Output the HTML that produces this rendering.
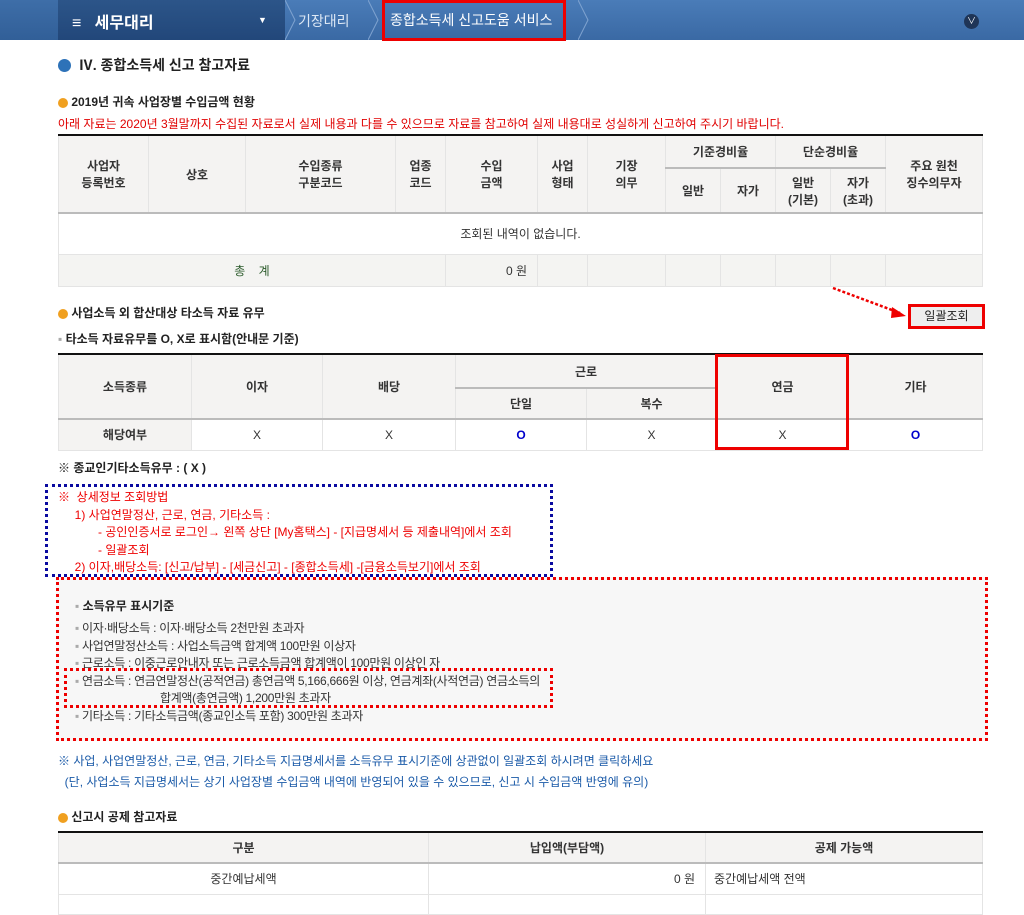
<!DOCTYPE html>
<html><head><meta charset="utf-8"><style>
*{margin:0;padding:0;box-sizing:border-box}
body{width:1024px;height:905px;overflow:hidden;background:#fff;font-family:"Liberation Sans","Noto Sans CJK KR","NanumGothic",sans-serif;font-size:12px;color:#333;position:relative}
.a{position:absolute;white-space:nowrap}
table{border-collapse:collapse;position:absolute;table-layout:fixed}
td,th{border:1px solid #e4e4e4;text-align:center;font-size:12px;padding:0}
th{background:#f4f3f2;font-weight:bold;color:#333}
.b{font-weight:bold;color:#222}
.dot{display:inline-block;width:13px;height:13px;border-radius:50%;vertical-align:-2px}
</style></head><body>
<!-- top bar -->
<div class="a" style="left:0;top:0;width:1024px;height:40px;background:linear-gradient(#4a7cb8,#3a69a4)"></div>
<div class="a" style="left:0;top:0;width:58px;height:40px;background:linear-gradient(#3e6ea8,#315f98)"></div>
<div class="a" style="left:58px;top:0;width:227px;height:40px;background:linear-gradient(#2c5589,#22477a)"></div>
<div class="a" style="left:72px;top:9px;color:#fff;font-size:16px;font-weight:bold">≡&nbsp;&nbsp; 세무대리</div>
<div class="a" style="left:258px;top:15px;color:#fff;font-size:9px">▼</div>
<svg class="a" style="left:285px;top:0" width="12" height="40"><path d="M0 0 L10 20 L0 40" fill="none" stroke="#7fa3d0"/></svg>
<div class="a" style="left:298px;top:11px;color:#dde8f5;font-size:14px">기장대리</div>
<svg class="a" style="left:368px;top:0" width="12" height="40"><path d="M0 0 L10 20 L0 40" fill="none" stroke="#7fa3d0"/></svg>
<div class="a" style="left:390px;top:10px;color:#fff;font-size:14px">종합소득세 신고도움 서비스</div>
<svg class="a" style="left:578px;top:0" width="12" height="40"><path d="M0 0 L10 20 L0 40" fill="none" stroke="#7fa3d0"/></svg>
<div class="a" style="left:382px;top:0;width:184px;height:41px;border:3px solid #e00"></div>
<div class="a" style="left:964px;top:14px;width:15px;height:15px;border-radius:50%;background:#1f3557;color:#fff;font-size:9px;text-align:center;line-height:15px">∨</div>

<div class="a b" style="left:58px;top:55px;font-size:14px"><span class="dot" style="background:#2d72b8"></span>&nbsp; Ⅳ. 종합소득세 신고 참고자료</div>
<div class="a b" style="left:58px;top:93px;font-size:12px"><span class="dot" style="background:#f0a020;width:10px;height:10px"></span> 2019년 귀속 사업장별 수입금액 현황</div>
<div class="a" style="left:58px;top:115px;color:#e00000;font-size:12px">아래 자료는 2020년 3월말까지 수집된 자료로서 실제 내용과 다를 수 있으므로 자료를 참고하여 실제 내용대로 성실하게 신고하여 주시기 바랍니다.</div>

<table style="left:58px;top:134px;width:924px;border-top:2px solid #111">
<colgroup><col style="width:90px"><col style="width:97px"><col style="width:150px"><col style="width:50px"><col style="width:92px"><col style="width:50px"><col style="width:78px"><col style="width:55px"><col style="width:55px"><col style="width:55px"><col style="width:55px"><col style="width:97px"></colgroup>
<tr style="height:33px"><th rowspan="2">사업자<br>등록번호</th><th rowspan="2">상호</th><th rowspan="2">수입종류<br>구분코드</th><th rowspan="2">업종<br>코드</th><th rowspan="2">수입<br>금액</th><th rowspan="2">사업<br>형태</th><th rowspan="2">기장<br>의무</th><th colspan="2" style="border-bottom:2px solid #bbb">기준경비율</th><th colspan="2" style="border-bottom:2px solid #bbb">단순경비율</th><th rowspan="2">주요 원천<br>징수의무자</th></tr>
<tr style="height:45px"><th>일반</th><th>자가</th><th>일반<br>(기본)</th><th>자가<br>(초과)</th></tr>
<tr style="height:41px"><td colspan="12" style="border-top:2px solid #bbb">조회된 내역이 없습니다.</td></tr>
<tr style="height:32px;background:#f4f4f2"><td colspan="4" style="color:#2a5a2a">총&nbsp;&nbsp;&nbsp;&nbsp;계</td><td style="text-align:right;padding-right:10px">0 원</td><td></td><td></td><td></td><td></td><td></td><td></td><td></td></tr>
</table>

<svg class="a" style="left:830px;top:285px" width="80" height="40"><path d="M3 3 L70 28" stroke="#e00" stroke-width="2.5" stroke-dasharray="3 2"/><path d="M62 22 L76 31 L61 33 Z" fill="#e00"/></svg>
<div class="a" style="left:908px;top:304px;width:77px;height:25px;border:3px solid #e00;background:#eee;text-align:center;line-height:19px;font-size:12px;color:#222">일괄조회</div>

<div class="a b" style="left:58px;top:304px"><span class="dot" style="background:#f0a020;width:10px;height:10px"></span> 사업소득 외 합산대상 타소득 자료 유무</div>
<div class="a b" style="left:58px;top:330px"><span style="color:#aaa">▪</span> 타소득 자료유무를 O, X로 표시함(안내문 기준)</div>

<table style="left:58px;top:353px;width:924px;border-top:2px solid #111">
<colgroup><col style="width:133px"><col style="width:131px"><col style="width:133px"><col style="width:131px"><col style="width:130px"><col style="width:132px"><col style="width:134px"></colgroup>
<tr style="height:34px"><th rowspan="2">소득종류</th><th rowspan="2">이자</th><th rowspan="2">배당</th><th colspan="2" style="border-bottom:2px solid #bbb">근로</th><th rowspan="2">연금</th><th rowspan="2">기타</th></tr>
<tr style="height:31px"><th>단일</th><th>복수</th></tr>
<tr style="height:31px"><th style="border-top:2px solid #bbb">해당여부</th><td style="border-top:2px solid #bbb">X</td><td style="border-top:2px solid #bbb">X</td><td style="border-top:2px solid #bbb;color:#00c;font-weight:bold">O</td><td style="border-top:2px solid #bbb">X</td><td style="border-top:2px solid #bbb">X</td><td style="border-top:2px solid #bbb;color:#00c;font-weight:bold">O</td></tr>
</table>
<div class="a" style="left:715px;top:354px;width:134px;height:96px;border:3px solid #e00"></div>

<div class="a b" style="left:58px;top:459px">※ 종교인기타소득유무 : ( X )</div>

<div class="a" style="left:45px;top:484px;width:508px;height:93px;border:3px dotted #0a0aa0"></div>
<div class="a" style="left:58px;top:489px;color:#e00;line-height:17.5px">※&nbsp; 상세정보 조회방법<br>&nbsp;&nbsp;&nbsp;&nbsp;&nbsp;1) 사업연말정산, 근로, 연금, 기타소득 :<br>&nbsp;&nbsp;&nbsp;&nbsp;&nbsp;&nbsp;&nbsp;&nbsp;&nbsp;&nbsp;&nbsp;&nbsp;- 공인인증서로 로그인→ 왼쪽 상단 [My홈택스] - [지급명세서 등 제출내역]에서 조회<br>&nbsp;&nbsp;&nbsp;&nbsp;&nbsp;&nbsp;&nbsp;&nbsp;&nbsp;&nbsp;&nbsp;&nbsp;- 일괄조회<br>&nbsp;&nbsp;&nbsp;&nbsp;&nbsp;2) 이자,배당소득: [신고/납부] - [세금신고] - [종합소득세] -[금융소득보기]에서 조회</div>

<div class="a" style="left:56px;top:577px;width:932px;height:164px;border:3px dotted #e00;background:#f7f7f7"></div>
<div class="a b" style="left:75px;top:597px"><span style="color:#aaa">▪</span> 소득유무 표시기준</div>
<div class="a" style="left:75px;top:620px;line-height:17.5px;color:#333;letter-spacing:-0.3px"><span style="color:#aaa">▪</span> 이자·배당소득 : 이자·배당소득 2천만원 초과자<br><span style="color:#aaa">▪</span> 사업연말정산소득 : 사업소득금액 합계액 100만원 이상자<br><span style="color:#aaa">▪</span> 근로소득 : 이중근로안내자 또는 근로소득금액 합계액이 100만원 이상인 자<br><span style="color:#aaa">▪</span> 연금소득 : 연금연말정산(공적연금) 총연금액 5,166,666원 이상, 연금계좌(사적연금) 연금소득의<br>&nbsp;&nbsp;&nbsp;&nbsp;&nbsp;&nbsp;&nbsp;&nbsp;&nbsp;&nbsp;&nbsp;&nbsp;&nbsp;&nbsp;&nbsp;&nbsp;&nbsp;&nbsp;&nbsp;&nbsp;&nbsp;&nbsp;&nbsp;&nbsp;&nbsp;&nbsp;&nbsp;&nbsp;합계액(총연금액) 1,200만원 초과자<br><span style="color:#aaa">▪</span> 기타소득 : 기타소득금액(종교인소득 포함) 300만원 초과자</div>
<div class="a" style="left:64px;top:668px;width:489px;height:40px;border:3px dotted #e00"></div>

<div class="a" style="left:58px;top:752px;color:#1a5aa8">※ 사업, 사업연말정산, 근로, 연금, 기타소득 지급명세서를 소득유무 표시기준에 상관없이 일괄조회 하시려면 클릭하세요</div>
<div class="a" style="left:58px;top:773px;color:#1a5aa8">&nbsp;&nbsp;(단, 사업소득 지급명세서는 상기 사업장별 수입금액 내역에 반영되어 있을 수 있으므로, 신고 시 수입금액 반영에 유의)</div>

<div class="a b" style="left:58px;top:808px"><span class="dot" style="background:#f0a020;width:10px;height:10px"></span> 신고시 공제 참고자료</div>
<table style="left:58px;top:831px;width:924px;border-top:2px solid #111">
<colgroup><col style="width:370px"><col style="width:277px"><col style="width:277px"></colgroup>
<tr style="height:31px"><th style="border-bottom:2px solid #bbb">구분</th><th style="border-bottom:2px solid #bbb">납입액(부담액)</th><th style="border-bottom:2px solid #bbb">공제 가능액</th></tr>
<tr style="height:31px"><td>중간예납세액</td><td style="text-align:right;padding-right:10px">0 원</td><td style="text-align:left;padding-left:8px">중간예납세액 전액</td></tr>
<tr style="height:20px"><td></td><td></td><td></td></tr>
</table>
</body></html>
